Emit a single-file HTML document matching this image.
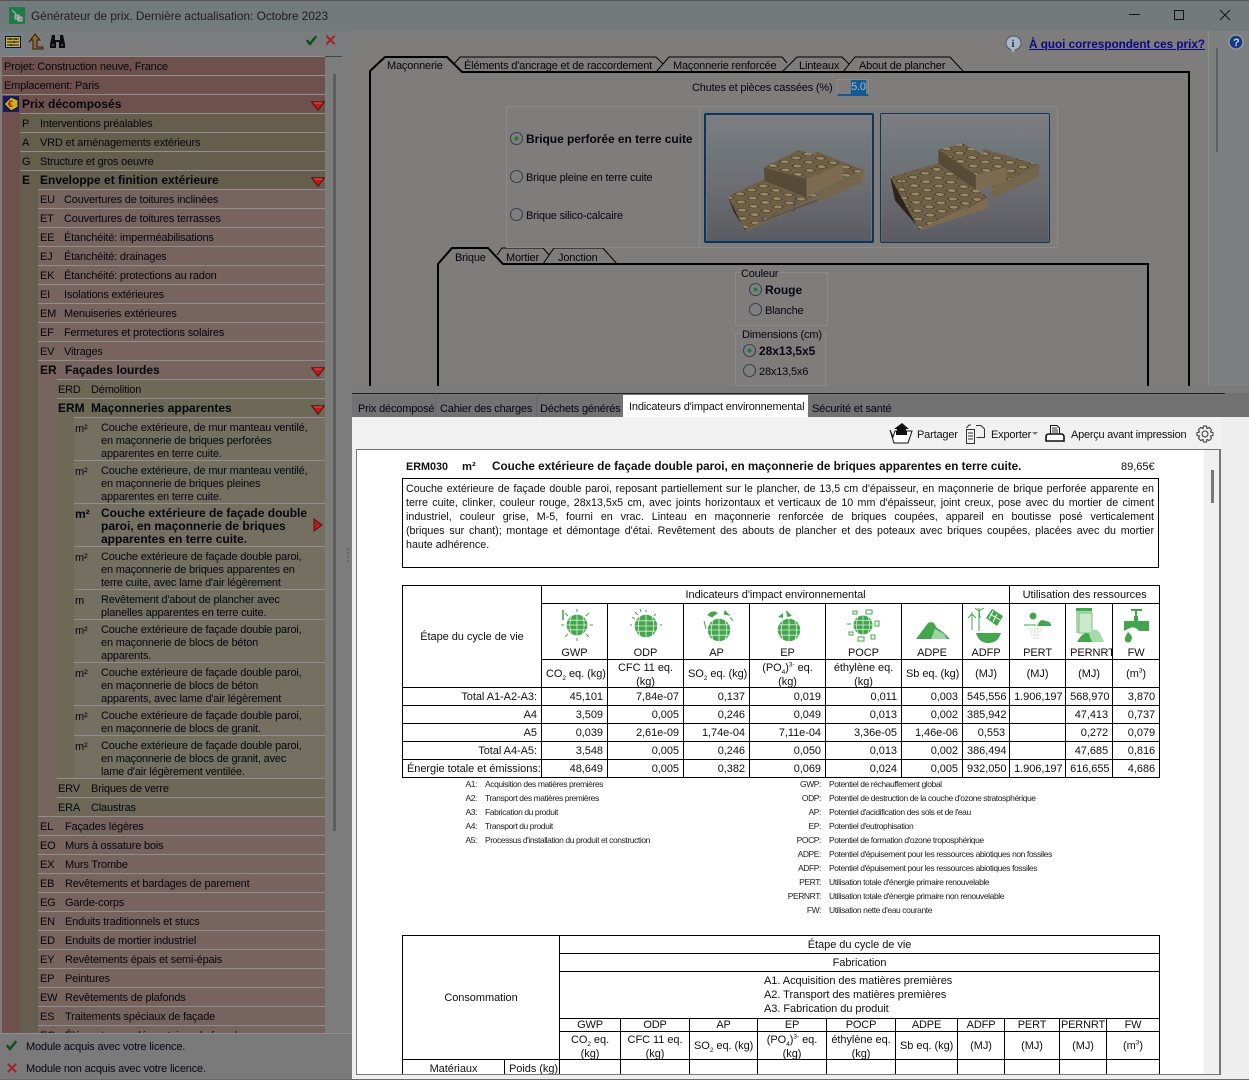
<!DOCTYPE html>
<html lang="fr"><head><meta charset="utf-8"><title>Générateur de prix</title>
<style>
html,body{margin:0;padding:0;width:1249px;height:1080px;overflow:hidden;background:#7d7d7d}
body{position:relative;font:11px "Liberation Sans",sans-serif;letter-spacing:-.18px;color:#05050f}
div,span.a,svg.a{position:absolute}
.t{white-space:nowrap;line-height:14px;margin-top:1px}
.h{font-size:12px;font-weight:bold;letter-spacing:-.05px;margin-top:0}
.m0{margin-top:0}
.r{box-sizing:border-box;border-top:1px solid #8f8f8f;white-space:nowrap}
.r b,.r i{position:absolute;font-style:normal;font-weight:normal;line-height:18px;top:1px;white-space:nowrap}
.r.bd b,.r.bd i{font-weight:bold;font-size:12px;letter-spacing:0;top:0}
.l0{left:2px;width:323px;height:19px;background:#6e514c}
.l1{left:20px;width:305px;height:19px;background:#655e4d}
.l2{left:38px;width:287px;height:19px;background:#78645e}
.l3{left:57px;width:268px;height:19px;background:#6e6957}
.l4{left:74px;width:251px;background:#746f60}
.l4 b{left:1px;top:4px;line-height:14px}
.l4 i{left:27px;top:4px;line-height:13px}
.r.bd.l4 b,.r.bd.l4 i{top:3px}
.r.bd.l4 b{line-height:14px}
.r.bd.l4 i{line-height:13px}
.gb{border:1px solid #8a8a8a}
.tb{position:absolute;border-collapse:collapse;table-layout:fixed;background:#fff;color:#111;letter-spacing:-.05px;font:11px/13.5px "Liberation Sans",sans-serif}
.tb td{border:1px solid #000;padding:0 4px;text-align:center;overflow:hidden;white-space:nowrap;letter-spacing:-.05px}
.tb td.n{text-align:right}
.tb tr.s td{padding-top:2px}
.tb tr.l td{line-height:11.500px}
.tb tr.z td{padding:0;letter-spacing:-.15px}
.tb td.q{padding-top:0 !important}
.tb td.c{padding-top:3px}
.tb .u{display:block;position:relative;top:1px;height:27px;line-height:14px}
.tb sub,.tb sup{font-size:6.500px;line-height:0}
.lg{font-size:8.500px;line-height:14px;color:#222;white-space:nowrap;letter-spacing:-.42px}
.ll{text-align:right}
.jl{position:absolute;left:406px;width:748px;height:14px;overflow:hidden;line-height:14px;font-size:10.700px;letter-spacing:0;text-align:justify;text-align-last:justify;white-space:normal;color:#111}
</style></head><body>
<svg width="0" height="0" style="position:absolute"><defs>
<symbol id="gl" viewBox="0 0 30 30"><circle cx="15" cy="15" r="13" fill="#43a64c"/><g stroke="#d8efd8" stroke-width="1" fill="none"><path d="M2 15H28M4 9H26M4 21H26"/><path d="M15 2V28M8 4Q4 15 8 26M22 4Q26 15 22 26"/></g></symbol>
<linearGradient id="bg" x1="0" y1="0" x2="0" y2="1"><stop offset="0" stop-color="#7e7e82"/><stop offset=".3" stop-color="#6e767a"/><stop offset=".5" stop-color="#6f7074"/><stop offset="1" stop-color="#5b5b62"/></linearGradient>
<pattern id="st" patternUnits="userSpaceOnUse" width="1" height="1" patternTransform="matrix(13 4.500 12 -4 0 0)"><rect width="1" height="1" fill="#6f5f47"/><ellipse cx=".5" cy=".5" rx=".29" ry=".29" fill="#968863" stroke="#3f3525" stroke-width=".07"/></pattern>
<symbol id="b1" viewBox="0 0 170 130"><rect width="170" height="130" fill="url(#bg)"/>
<path d="M112 37L162 57L116 78Z" fill="url(#st)"/><path d="M116 76L162 57L160 70L114 90Z" fill="#74654d"/>
<path d="M22 84L60 66L116 82L39 118Z" fill="url(#st)"/><path d="M39 118L116 82L114 90L41 120Z" fill="#74654d"/><path d="M22 84L39 118L41 120L28 100Z" fill="#2d2519"/>
<path d="M59 54L95 36L141 50L103 66Z" fill="url(#st)"/><path d="M103 66L141 50L141 66L103 85Z" fill="#7c6b51"/><path d="M59 54L103 66L103 85L60 68Z" fill="#574a36"/>
<path d="M90 100L92 80M56 110L114 88" stroke="#4e5358" stroke-width="1.500" fill="none"/></symbol>
<symbol id="b2" viewBox="0 0 170 130"><rect width="170" height="130" fill="url(#bg)"/>
<path d="M103 35L161 52L112 76Z" fill="url(#st)"/><path d="M112 74L161 52L160 64L112 86Z" fill="#74654d"/>
<path d="M9 64L58 50L108 84L38 117Z" fill="url(#st)"/><path d="M38 117L108 84L108 96L40 118Z" fill="#7c6b51"/><path d="M9 64L38 117L40 118L14 88Z" fill="#2d2519"/><path d="M20 66L30 96M88 95L108 84" stroke="#5b4c38" stroke-width="1" fill="none"/>
<path d="M58 36L83 30L127 54L96 62Z" fill="url(#st)"/><path d="M96 62L127 54L127 69L96 77Z" fill="#7c6b51"/><path d="M58 36L96 62L96 77L58 50Z" fill="#574a36"/></symbol>
<symbol id="tri" viewBox="0 0 14 10"><path d="M.5 .7H13.500L7 9.300Z" fill="#c21818" stroke="#4b1515"/><path d="M3 2H11" stroke="#ee5555"/></symbol>
</defs></svg>

<!-- left panel base -->
<div style="left:0;top:0;width:1249px;height:31px;background:#727a7c;border-top:1px solid #555;box-sizing:border-box"></div>
<svg class="a" style="left:9px;top:7px" width="16" height="17" viewBox="0 0 16 17"><rect width="16" height="17" fill="#1d7a47"/><path d="M3 3L7 7M6 8H10V12H6ZM9 10H13V14H9Z" stroke="#bbb" fill="#888"/></svg>
<div class="t m0" style="left:31px;top:9px;font-size:11.800px;letter-spacing:0;color:#1c1c1c">Générateur de prix. Dernière actualisation: Octobre 2023</div>
<div style="left:0;top:31px;width:352px;height:25px;background:#7a7c7d"></div>
<div style="left:2px;top:32px;width:21px;height:20px;background:#748089;border:1px solid #6a8296;box-sizing:border-box;border-radius:2px"></div>
<svg class="a" style="left:5px;top:36px" width="16" height="12" viewBox="0 0 16 12"><rect x=".5" y=".5" width="15" height="11" fill="#c8b24a" stroke="#111"/><path d="M2 3H14M2 6H14M2 9H14M5 2V4M9 5V7M6 8V10M11 2V4" stroke="#111"/></svg>
<svg class="a" style="left:28px;top:33px" width="16" height="17" viewBox="0 0 16 17"><path d="M1 9L7 1L12 7H9V14H15V16H5V7H3Z" fill="#8d6a35" stroke="#2f1f08"/></svg>
<svg class="a" style="left:49px;top:34px" width="17" height="15" viewBox="0 0 17 15"><path d="M3 1H6V6H11V1H14L16 10V14H10V8H7V14H1V10Z" fill="#0c0c0c"/><path d="M3 11H5M12 11H14" stroke="#888"/></svg>
<svg class="a" style="left:306px;top:35px" width="11" height="11" viewBox="0 0 14 13"><path d="M1 6L5 11L13 1" stroke="#0a4f18" stroke-width="3" fill="none"/></svg>
<svg class="a" style="left:325px;top:35px" width="11" height="10" viewBox="0 0 12 12"><path d="M1 1L11 11M11 1L1 11" stroke="#a51d1d" stroke-width="2.200" fill="none"/></svg>

<div style="left:2px;top:56px;width:340px;height:978px;background:#7c7c7c;border-top:1px solid #444;box-sizing:border-box"></div>
<div style="left:2px;top:57px;width:18px;height:977px;background:#6e514c"></div>
<div style="left:20px;top:95px;width:18px;height:939px;background:#655e4d"></div>
<div style="left:38px;top:190px;width:19px;height:844px;background:#78645e"></div>
<div style="left:57px;top:380px;width:17px;height:437px;background:#6e6957"></div>
<div style="left:333px;top:74px;width:3px;height:757px;background:#5d5d5d"></div>

<div class="r l0" style="top:56px"><b style="left:2px">Projet: Construction neuve, France</b></div>
<div class="r l0" style="top:75px"><b style="left:2px">Emplacement: Paris</b></div>
<div class="r l0 bd" style="top:94px"><b style="left:20px">Prix décomposés</b><svg style="position:absolute;left:309px;top:6px;width:14px;height:10px"><use href="#tri"/></svg></div>
<svg class="a" style="left:3px;top:96px" width="16" height="16" viewBox="0 0 16 16"><rect width="16" height="16" fill="#1a1a6e"/><path d="M8 1L15 4V11L8 15L1 8Z" fill="#c9b51a" stroke="#111"/><text x="5" y="11" font-size="9" font-weight="bold" fill="#a01010">€</text></svg>

<div class="r l1" style="top:113px"><b style="left:2px">P</b><i style="left:20px">Interventions préalables</i></div>
<div class="r l1" style="top:132px"><b style="left:2px">A</b><i style="left:20px">VRD et aménagements extérieurs</i></div>
<div class="r l1" style="top:151px"><b style="left:2px">G</b><i style="left:20px">Structure et gros oeuvre</i></div>
<div class="r l1 bd" style="top:170px"><b style="left:2px">E</b><i style="left:20px">Enveloppe et finition extérieure</i><svg style="position:absolute;left:291px;top:6px;width:14px;height:10px"><use href="#tri"/></svg></div>

<div class="r l2" style="top:189px"><b style="left:2px">EU</b><i style="left:26px">Couvertures de toitures inclinées</i></div>
<div class="r l2" style="top:208px"><b style="left:2px">ET</b><i style="left:26px">Couvertures de toitures terrasses</i></div>
<div class="r l2" style="top:227px"><b style="left:2px">EE</b><i style="left:26px">Étanchéité: imperméabilisations</i></div>
<div class="r l2" style="top:246px"><b style="left:2px">EJ</b><i style="left:26px">Étanchéité: drainages</i></div>
<div class="r l2" style="top:265px"><b style="left:2px">EK</b><i style="left:26px">Étanchéité: protections au radon</i></div>
<div class="r l2" style="top:284px"><b style="left:2px">EI</b><i style="left:26px">Isolations extérieures</i></div>
<div class="r l2" style="top:303px"><b style="left:2px">EM</b><i style="left:26px">Menuiseries extérieures</i></div>
<div class="r l2" style="top:322px"><b style="left:2px">EF</b><i style="left:26px">Fermetures et protections solaires</i></div>
<div class="r l2" style="top:341px"><b style="left:2px">EV</b><i style="left:26px">Vitrages</i></div>
<div class="r l2 bd" style="top:360px"><b style="left:2px">ER</b><i style="left:27px">Façades lourdes</i><svg style="position:absolute;left:273px;top:6px;width:14px;height:10px"><use href="#tri"/></svg></div>

<div class="r l3" style="top:379px"><b style="left:1px">ERD</b><i style="left:34px">Démolition</i></div>
<div class="r l3 bd" style="top:398px"><b style="left:1px">ERM</b><i style="left:34px">Maçonneries apparentes</i><svg style="position:absolute;left:254px;top:6px;width:14px;height:10px"><use href="#tri"/></svg></div>

<div class="r l4" style="top:417px;height:44px"><b>m²</b><i>Couche extérieure, de mur manteau ventilé,<br>en maçonnerie de briques perforées<br>apparentes en terre cuite.</i></div>
<div class="r l4" style="top:460px;height:43px"><b>m²</b><i>Couche extérieure, de mur manteau ventilé,<br>en maçonnerie de briques pleines<br>apparentes en terre cuite.</i></div>
<div class="r l4 bd" style="top:503px;height:43px"><b>m²</b><i>Couche extérieure de façade double<br>paroi, en maçonnerie de briques<br>apparentes en terre cuite.</i><svg style="position:absolute;left:239px;top:14px;width:10px;height:14px" viewBox="0 0 10 14"><path d="M1 1V13L9 7Z" fill="#c21818" stroke="#4b1515"/></svg></div>
<div class="r l4" style="top:546px;height:43px"><b>m²</b><i>Couche extérieure de façade double paroi,<br>en maçonnerie de briques apparentes en<br>terre cuite, avec lame d'air légèrement</i></div>
<div class="r l4" style="top:589px;height:30px"><b>m</b><i>Revêtement d'about de plancher avec<br>planelles apparentes en terre cuite.</i></div>
<div class="r l4" style="top:619px;height:43px"><b>m²</b><i>Couche extérieure de façade double paroi,<br>en maçonnerie de blocs de béton<br>apparents.</i></div>
<div class="r l4" style="top:662px;height:43px"><b>m²</b><i>Couche extérieure de façade double paroi,<br>en maçonnerie de blocs de béton<br>apparents, avec lame d'air légèrement</i></div>
<div class="r l4" style="top:705px;height:30px"><b>m²</b><i>Couche extérieure de façade double paroi,<br>en maçonnerie de blocs de granit.</i></div>
<div class="r l4" style="top:735px;height:43px"><b>m²</b><i>Couche extérieure de façade double paroi,<br>en maçonnerie de blocs de granit, avec<br>lame d'air légèrement ventilée.</i></div>

<div class="r l3" style="top:778px"><b style="left:1px">ERV</b><i style="left:34px">Briques de verre</i></div>
<div class="r l3" style="top:797px"><b style="left:1px">ERA</b><i style="left:34px">Claustras</i></div>

<div class="r l2" style="top:816px"><b style="left:2px">EL</b><i style="left:27px">Façades légères</i></div>
<div class="r l2" style="top:835px"><b style="left:2px">EO</b><i style="left:27px">Murs à ossature bois</i></div>
<div class="r l2" style="top:854px"><b style="left:2px">EX</b><i style="left:27px">Murs Trombe</i></div>
<div class="r l2" style="top:873px"><b style="left:2px">EB</b><i style="left:27px">Revêtements et bardages de parement</i></div>
<div class="r l2" style="top:892px"><b style="left:2px">EG</b><i style="left:27px">Garde-corps</i></div>
<div class="r l2" style="top:911px"><b style="left:2px">EN</b><i style="left:27px">Enduits traditionnels et stucs</i></div>
<div class="r l2" style="top:930px"><b style="left:2px">ED</b><i style="left:27px">Enduits de mortier industriel</i></div>
<div class="r l2" style="top:949px"><b style="left:2px">EY</b><i style="left:27px">Revêtements épais et semi-épais</i></div>
<div class="r l2" style="top:968px"><b style="left:2px">EP</b><i style="left:27px">Peintures</i></div>
<div class="r l2" style="top:987px"><b style="left:2px">EW</b><i style="left:27px">Revêtements de plafonds</i></div>
<div class="r l2" style="top:1006px"><b style="left:2px">ES</b><i style="left:27px">Traitements spéciaux de façade</i></div>
<div class="r l2" style="top:1025px;height:9px;overflow:hidden"><b style="left:2px">EC</b><i style="left:27px">Éléments complémentaires de façade</i></div>

<div style="left:0;top:1033px;width:352px;height:47px;background:#7a7a7a;border-top:1px solid #8f8f8f;box-sizing:border-box"></div>
<svg class="a" style="left:6px;top:1040px" width="11" height="11" viewBox="0 0 14 13"><path d="M1 6L5 11L13 1" stroke="#0a4f18" stroke-width="3" fill="none"/></svg>
<div class="t" style="left:26px;top:1039px">Module acquis avec votre licence.</div>
<svg class="a" style="left:7px;top:1063px" width="10" height="10" viewBox="0 0 12 12"><path d="M1 1L11 11M11 1L1 11" stroke="#a51d1d" stroke-width="2.200" fill="none"/></svg>
<div class="t" style="left:26px;top:1061px">Module non acquis avec votre licence.</div>
<div style="left:347px;top:548px;width:2px;height:14px;border-left:2px dotted #666"></div>
<div style="left:0;top:1079px;width:352px;height:1px;background:#444"></div>

<!-- window controls -->
<div style="left:1129px;top:14px;width:11px;height:1px;background:#111"></div>
<div style="left:1174px;top:10px;width:8px;height:8px;border:1px solid #111"></div>
<svg class="a" style="left:1219px;top:9px" width="12" height="12"><path d="M1 1L11 11M11 1L1 11" stroke="#111" fill="none"/></svg>

<!-- right top panel -->
<div style="left:352px;top:31px;width:897px;height:362px;background:#7e7d7c"></div>
<div style="left:1208px;top:31px;width:41px;height:362px;background:#7d8080;border-left:1px solid #8b8b8b;box-sizing:border-box"></div>
<div style="left:1216px;top:48px;width:2px;height:104px;background:#5f5f5f"></div>
<svg class="a" style="left:1005px;top:35px" width="17" height="18" viewBox="0 0 17 18"><ellipse cx="8.500" cy="8" rx="7.500" ry="7" fill="#a8b8c4" stroke="#556"/><path d="M6 14L8 18L10 14Z" fill="#a8b8c4"/><text x="6.500" y="12" font-size="11" font-weight="bold" font-family="Liberation Serif" fill="#123a66">i</text></svg>
<div class="t" style="left:1029px;top:37px;font-weight:bold;font-size:11.700px;letter-spacing:0;color:#090985;text-decoration:underline">À quoi correspondent ces prix?</div>
<svg class="a" style="left:1228px;top:34px" width="16" height="16" viewBox="0 0 16 16"><circle cx="8" cy="8" r="7" fill="#123a85" stroke="#999" stroke-width="1.400"/><text x="5" y="12" font-size="11" font-weight="bold" fill="#cfd8e8">?</text></svg>

<svg class="a" style="left:352px;top:31px" width="897" height="362" viewBox="352 31 897 362" fill="none">
<path d="M370 386V71L385 57H447L462 72H1189V386" stroke="#000" stroke-width="2"/>
<path d="M454 64L460 57H656L663 64M656 72L669 57H782L787 63M782 72L797 57H842L849 64M843 72L855 57H950L963 71" stroke="#000"/>
<path d="M438 386V264L452 248H488L503 264H1148V386" stroke="#000" stroke-width="2"/>
<path d="M497 255L502 248H543L549 255M543 264L554 248H603L617 264" stroke="#000"/>
</svg>
<div class="t" style="left:387px;top:58px">Maçonnerie</div>
<div class="t" style="left:464px;top:58px">Éléments d'ancrage et de raccordement</div>
<div class="t" style="left:673px;top:58px">Maçonnerie renforcée</div>
<div class="t" style="left:799px;top:58px">Linteaux</div>
<div class="t" style="left:859px;top:58px">About de plancher</div>
<div class="t" style="left:692px;top:80px">Chutes et pièces cassées (%)</div>
<div style="left:837px;top:79px;width:32px;height:17px;box-sizing:border-box;border:1px solid #888;border-bottom:2px solid #0f5c96"></div>
<div class="t m0" style="left:851px;top:80px;width:15px;height:14px;background:#0f5c96;color:#b8b8b8;text-align:center;line-height:15px">5.0</div>

<div class="gb" style="left:506px;top:106px;width:192px;height:140px"></div>
<div class="gb" style="left:699px;top:106px;width:357px;height:140px"></div>
<svg class="a" style="left:704px;top:113px;border:2px solid #0a355c;box-sizing:border-box;border-radius:2px" width="170" height="130" viewBox="0 0 170 130"><use href="#b1" width="170" height="130"/></svg>
<svg class="a" style="left:880px;top:113px;border:1px solid #0f3557;box-sizing:border-box;border-radius:2px" width="170" height="130" viewBox="0 0 170 130"><use href="#b2" width="170" height="130"/></svg>

<svg class="a" style="left:352px;top:31px" width="850" height="362" viewBox="352 31 850 362">
<g fill="#807f80" stroke="#36424f" stroke-width="1.100"><circle cx="516.500" cy="138.500" r="6"/><circle cx="516.500" cy="176.500" r="6"/><circle cx="516.500" cy="214.500" r="6"/><circle cx="755.500" cy="289.500" r="6"/><circle cx="755.500" cy="309.500" r="6"/><circle cx="749.500" cy="350.500" r="6"/><circle cx="749.500" cy="370.500" r="6"/></g>
<g fill="#1f7a36"><circle cx="516.500" cy="138.500" r="2"/><circle cx="755.500" cy="289.500" r="2"/><circle cx="749.500" cy="350.500" r="2"/></g></svg>
<div class="t h" style="left:526px;top:132px">Brique perforée en terre cuite</div>
<div class="t" style="left:526px;top:170px">Brique pleine en terre cuite</div>
<div class="t" style="left:526px;top:208px">Brique silico-calcaire</div>

<div class="t" style="left:455px;top:250px">Brique</div>
<div class="t" style="left:506px;top:250px">Mortier</div>
<div class="t" style="left:558px;top:250px">Jonction</div>

<div class="gb" style="left:735px;top:272px;width:91px;height:52px"></div>
<div class="t" style="left:740px;top:266px;background:#7e7d7c;padding:0 1px">Couleur</div>
<div class="t h" style="left:765px;top:283px">Rouge</div>
<div class="t" style="left:765px;top:303px">Blanche</div>
<div style="left:735px;top:333px;width:91px;height:53px;border:1px solid #8a8a8a;box-sizing:border-box"></div>
<div class="t" style="left:741px;top:327px;background:#7e7d7c;padding:0 1px">Dimensions (cm)</div>
<div class="t h" style="left:759px;top:344px">28x13,5x5</div>
<div class="t" style="left:759px;top:364px">28x13,5x6</div>

<!-- tab strip -->
<div style="left:352px;top:386px;width:897px;height:7px;background:#7b7b7b"></div>
<div style="left:352px;top:393px;width:897px;height:24px;background:#727272"></div>
<div style="left:352px;top:393px;width:873px;height:1px;background:#222"></div>
<div class="t" style="left:358px;top:401px">Prix décomposé</div>
<div class="t" style="left:440px;top:401px">Cahier des charges</div>
<div class="t" style="left:540px;top:401px">Déchets générés</div>
<div class="t m0" style="left:623px;top:395px;width:185px;height:22px;background:#fff;color:#111;text-indent:6px;line-height:24px">Indicateurs d'impact environnemental</div>
<div class="t" style="left:812px;top:401px">Sécurité et santé</div>
<div style="left:435px;top:396px;width:1px;height:21px;background:#676767"></div>
<div style="left:536px;top:396px;width:1px;height:21px;background:#676767"></div>

<!-- document pane -->
<div style="left:352px;top:417px;width:897px;height:663px;background:#eee"></div>
<div style="left:352px;top:417px;width:869px;height:32px;background:#f1f1f1"></div>
<div style="left:356px;top:449px;width:865px;height:626px;background:#fff;border:1px solid #777;border-right:2px solid #777;box-sizing:border-box"></div>
<div style="left:1204px;top:450px;width:15px;height:624px;background:#f0f0f0"></div>
<div style="left:1211px;top:470px;width:3px;height:33px;background:#777"></div>
<div style="left:0;top:1079px;width:1249px;height:1px;background:#6a6a6a"></div>

<svg class="a" style="left:889px;top:422px" width="24" height="22" viewBox="0 0 24 22"><path d="M1 8L5 21H19L23 9H6L4 15Z" fill="#fff" stroke="#111"/><path d="M8 9V7H5L13 1L20 7H17V9Z" fill="#111"/><path d="M7 9H18V13H7Z" fill="#111"/></svg>
<div class="t" style="left:917px;top:427px;color:#111">Partager</div>
<svg class="a" style="left:965px;top:424px" width="21" height="20" viewBox="0 0 21 20" fill="none" stroke="#333"><path d="M1.500 5.500H9.500V19.500H1.500ZM3 9H8M3 12H8M3 15H8"/><path d="M11 1.500H16L19.500 5V13.500H11.500M1.500 4L4 1L6 1"/></svg>
<div class="t" style="left:991px;top:427px;color:#111">Exporter</div>
<svg class="a" style="left:1032px;top:432px" width="6" height="4"><path d="M0 0H6L3 3Z" fill="#777"/></svg>
<svg class="a" style="left:1045px;top:424px" width="20" height="19" viewBox="0 0 20 19"><path d="M5.500 1.500H12L14.500 4V10H5.500Z" fill="#fff" stroke="#111"/><path d="M7 4H12M7 6H13M7 8H13" stroke="#333"/><path d="M1 13Q1 10 4 10H16Q19 10 19 13V17H1Z" fill="#fff" stroke="#111" stroke-width="1.600"/></svg>
<div class="t" style="left:1071px;top:427px;color:#111;letter-spacing:-.25px">Aperçu avant impression</div>
<svg class="a" style="left:1196px;top:425px" width="18" height="18" viewBox="0 0 18 18" fill="none" stroke="#333"><circle cx="9" cy="9" r="3"/><path d="M7.500 1H10.500L11 3.500L13.300 2.500L15.500 4.700L14.500 7L17 7.500V10.500L14.500 11L15.500 13.300L13.300 15.500L11 14.500L10.500 17H7.500L7 14.500L4.700 15.500L2.500 13.300L3.500 11L1 10.500V7.500L3.500 7L2.500 4.700L4.700 2.500L7 3.500Z"/></svg>

<!-- heading -->
<div class="t m0" style="left:406px;top:460px;font-weight:bold;font-size:10.800px;letter-spacing:0;color:#111">ERM030</div>
<div class="t m0" style="left:462px;top:460px;font-weight:bold;font-size:11.200px;letter-spacing:0;color:#111">m²</div>
<div class="t m0" style="left:492px;top:460px;font-weight:bold;font-size:11.700px;letter-spacing:0;color:#111">Couche extérieure de façade double paroi, en maçonnerie de briques apparentes en terre cuite.</div>
<div class="t m0" style="left:1121px;top:460px;font-size:11px;letter-spacing:0;color:#111">89,65€</div>
<div style="left:402px;top:478px;width:757px;height:90px;border:1px solid #000;box-sizing:border-box"></div>
<div class="jl" style="top:482px">Couche extérieure de façade double paroi, reposant partiellement sur le plancher, de 13,5 cm d'épaisseur, en maçonnerie de brique perforée apparente en</div>
<div class="jl" style="top:496px">terre cuite, clinker, couleur rouge, 28x13,5x5 cm, avec joints horizontaux et verticaux de 10 mm d'épaisseur, joint creux, pose avec du mortier de ciment</div>
<div class="jl" style="top:510px">industriel, couleur grise, M-5, fourni en vrac. Linteau en maçonnerie renforcée de briques coupées, appareil en boutisse posé verticalement</div>
<div class="jl" style="top:524px">(briques sur chant); montage et démontage d'étai. Revêtement des abouts de plancher et des poteaux avec briques coupées, placées avec du mortier</div>
<div class="jl" style="top:538px;text-align-last:left">haute adhérence.</div>

<!-- table 1 -->
<table class="tb" style="left:402px;top:585px;width:757px">
<colgroup><col style="width:139px"><col style="width:66px"><col style="width:76px"><col style="width:66px"><col style="width:76px"><col style="width:76px"><col style="width:61px"><col style="width:47px"><col style="width:56px"><col style="width:47px"><col style="width:47px"></colgroup>
<tr class="s" style="height:18px"><td rowspan="3">Étape du cycle de vie</td><td colspan="7">Indicateurs d'impact environnemental</td><td colspan="3">Utilisation des ressources</td></tr>
<tr class="l" style="height:56px;vertical-align:bottom"><td>GWP</td><td>ODP</td><td>AP</td><td>EP</td><td>POCP</td><td>ADPE</td><td>ADFP</td><td>PERT</td><td>PERNRT</td><td>FW</td></tr>
<tr class="s" style="height:28px"><td>CO<sub>2</sub> eq. (kg)</td><td class="q"><span class="u">CFC 11 eq.<br>(kg)</span></td><td>SO<sub>2</sub> eq. (kg)</td><td class="q"><span class="u">(PO<sub>4</sub>)<sup>3-</sup> eq.<br>(kg)</span></td><td class="q"><span class="u">éthylène eq.<br>(kg)</span></td><td>Sb eq. (kg)</td><td>(MJ)</td><td>(MJ)</td><td>(MJ)</td><td>(m<sup>3</sup>)</td></tr>
<tr class="s" style="height:18px"><td class="n">Total A1-A2-A3:</td><td class="n">45,101</td><td class="n">7,84e-07</td><td class="n">0,137</td><td class="n">0,019</td><td class="n">0,011</td><td class="n">0,003</td><td class="n">545,556</td><td class="n">1.906,197</td><td class="n">568,970</td><td class="n">3,870</td></tr>
<tr class="s" style="height:18px"><td class="n">A4</td><td class="n">3,509</td><td class="n">0,005</td><td class="n">0,246</td><td class="n">0,049</td><td class="n">0,013</td><td class="n">0,002</td><td class="n">385,942</td><td class="n"></td><td class="n">47,413</td><td class="n">0,737</td></tr>
<tr class="s" style="height:18px"><td class="n">A5</td><td class="n">0,039</td><td class="n">2,61e-09</td><td class="n">1,74e-04</td><td class="n">7,11e-04</td><td class="n">3,36e-05</td><td class="n">1,46e-06</td><td class="n">0,553</td><td class="n"></td><td class="n">0,272</td><td class="n">0,079</td></tr>
<tr class="s" style="height:18px"><td class="n">Total A4-A5:</td><td class="n">3,548</td><td class="n">0,005</td><td class="n">0,246</td><td class="n">0,050</td><td class="n">0,013</td><td class="n">0,002</td><td class="n">386,494</td><td class="n"></td><td class="n">47,685</td><td class="n">0,816</td></tr>
<tr class="s" style="height:18px"><td class="n">Énergie totale et émissions:</td><td class="n">48,649</td><td class="n">0,005</td><td class="n">0,382</td><td class="n">0,069</td><td class="n">0,024</td><td class="n">0,005</td><td class="n">932,050</td><td class="n">1.906,197</td><td class="n">616,655</td><td class="n">4,686</td></tr>
</table>

<!-- impact icons -->
<svg class="a" style="left:560px;top:608px" width="34" height="34" viewBox="0 0 34 34"><use href="#gl" x="5" y="5" width="24" height="24"/><g stroke="#43a64c" fill="none"><path d="M4 17H1M33 17H30M17 4V1M17 33V30M8 8L5 5M26 26L29 29M26 8L29 5M8 26L5 29"/><path d="M3 2V12" stroke-width="1.600"/></g></svg>
<svg class="a" style="left:629px;top:608px" width="34" height="34" viewBox="0 0 34 34"><use href="#gl" x="4" y="5" width="26" height="26"/><g stroke="#43a64c" fill="none"><path d="M1 17H3M31 17H33M17 2V4M6 4L9 7M3 9L6 11M11 1L12 4M27 6L25 8"/></g></svg>
<svg class="a" style="left:703px;top:609px" width="32" height="34" viewBox="0 0 32 34"><use href="#gl" x="3" y="8" width="26" height="26"/><path d="M5 6Q9 1 14 4L9 8ZM22 2L26 6L21 5ZM1 12L3 20M27 8L30 12" stroke="#43a64c" fill="#43a64c"/></svg>
<svg class="a" style="left:775px;top:609px" width="28" height="34" viewBox="0 0 28 34"><use href="#gl" x="1" y="8" width="26" height="26"/><path d="M11 1L17 7L12 8ZM3 8L8 4L8 9Z" fill="#43a64c"/></svg>
<svg class="a" style="left:846px;top:608px" width="34" height="34" viewBox="0 0 34 34"><use href="#gl" x="6" y="6" width="22" height="22"/><path d="M7 3H11V6H7ZM20 2H26V6H20ZM1 16H5M29 13H33V18H29ZM3 24H7V27H3ZM12 29H18V33H12ZM25 27H29V31H25Z" stroke="#43a64c" fill="#fff"/></svg>
<svg class="a" style="left:915px;top:617px" width="36" height="24" viewBox="0 0 36 24"><path d="M1 22L16 2L22 11L28 15L35 22Z" fill="#43a64c"/><path d="M13 6L16 2L19 6L16 5Z" fill="#fff"/><path d="M16 22L20 12L29 17L32 22Z" fill="#9dd3a0"/></svg>
<svg class="a" style="left:967px;top:606px" width="37" height="38" viewBox="0 0 37 38"><g stroke="#43a64c" fill="none"><path d="M5 6V24M12 2V25M5 8L1 12M5 8L9 12M12 5L8 2M12 5L17 2M12 5L13 12"/></g><path d="M19 12L25 3L36 10L30 20Z" fill="#43a64c"/><path d="M23 8L33 14M26 5L22 13M30 8L26 16" stroke="#fff"/><path d="M9 27H34Q31 37 21 37Q12 37 9 27Z" fill="#43a64c"/></svg>
<svg class="a" style="left:1023px;top:610px" width="30" height="32" viewBox="0 0 30 32"><circle cx="10" cy="6" r="3.500" fill="#43a64c"/><path d="M15 14Q18 8 22 11Q28 11 28 16H14Z" fill="#43a64c"/><path d="M1 15H13" stroke="#43a64c"/><path d="M5 19H20M7 22H18M8 25H17M10 28H15" stroke="#b6dcb8" stroke-dasharray="2 1"/></svg>
<svg class="a" style="left:1075px;top:607px" width="30" height="37" viewBox="0 0 30 37"><rect x="1" y="1" width="16" height="3" fill="#43a64c"/><rect x="1" y="4" width="16" height="22" fill="#a8d9aa"/><rect x="4" y="6" width="13" height="20" fill="#cce9cd" stroke="#7cc280"/><path d="M2 35Q12 17 20 35Z" fill="#43a64c"/><path d="M14 27Q22 15 29 35H17Z" fill="#a8d9aa"/></svg>
<svg class="a" style="left:1122px;top:607px" width="28" height="36" viewBox="0 0 28 36"><path d="M2 14H12V9H16V14H27V24H17Q13 19 8 21L2 24Z" fill="#43a64c"/><path d="M9 3H20M14 3V9" stroke="#43a64c" stroke-width="2"/><path d="M6 25Q1 32 4 35Q9 37 10 31Q10 28 6 25Z" fill="#43a64c"/></svg>

<!-- legends -->
<div class="lg ll" style="left:427px;top:777px;width:50px">A1:</div><div class="lg" style="left:485px;top:777px">Acquisition des matières premières</div>
<div class="lg ll" style="left:427px;top:791px;width:50px">A2:</div><div class="lg" style="left:485px;top:791px">Transport des matières premières</div>
<div class="lg ll" style="left:427px;top:805px;width:50px">A3:</div><div class="lg" style="left:485px;top:805px">Fabrication du produit</div>
<div class="lg ll" style="left:427px;top:819px;width:50px">A4:</div><div class="lg" style="left:485px;top:819px">Transport du produit</div>
<div class="lg ll" style="left:427px;top:833px;width:50px">A5:</div><div class="lg" style="left:485px;top:833px">Processus d'installation du produit et construction</div>
<div class="lg ll" style="left:761px;top:777px;width:60px">GWP:</div><div class="lg" style="left:829px;top:777px">Potentiel de réchauffement global</div>
<div class="lg ll" style="left:761px;top:791px;width:60px">ODP:</div><div class="lg" style="left:829px;top:791px">Potentiel de destruction de la couche d'ozone stratosphérique</div>
<div class="lg ll" style="left:761px;top:805px;width:60px">AP:</div><div class="lg" style="left:829px;top:805px">Potentiel d'acidification des sols et de l'eau</div>
<div class="lg ll" style="left:761px;top:819px;width:60px">EP:</div><div class="lg" style="left:829px;top:819px">Potentiel d'eutrophisation</div>
<div class="lg ll" style="left:761px;top:833px;width:60px">POCP:</div><div class="lg" style="left:829px;top:833px">Potentiel de formation d'ozone troposphérique</div>
<div class="lg ll" style="left:761px;top:847px;width:60px">ADPE:</div><div class="lg" style="left:829px;top:847px">Potentiel d'épuisement pour les ressources abiotiques non fossiles</div>
<div class="lg ll" style="left:761px;top:861px;width:60px">ADFP:</div><div class="lg" style="left:829px;top:861px">Potentiel d'épuisement pour les ressources abiotiques fossiles</div>
<div class="lg ll" style="left:761px;top:875px;width:60px">PERT:</div><div class="lg" style="left:829px;top:875px">Utilisation totale d'énergie primaire renouvelable</div>
<div class="lg ll" style="left:761px;top:889px;width:60px">PERNRT:</div><div class="lg" style="left:829px;top:889px">Utilisation totale d'énergie primaire non renouvelable</div>
<div class="lg ll" style="left:761px;top:903px;width:60px">FW:</div><div class="lg" style="left:829px;top:903px">Utilisation nette d'eau courante</div>

<!-- table 2 -->
<div style="left:402px;top:935px;width:758px;height:139px;overflow:hidden">
<table class="tb" style="left:0;top:0;width:757px">
<colgroup><col style="width:102px"><col style="width:55px"><col style="width:61px"><col style="width:69px"><col style="width:68px"><col style="width:69px"><col style="width:69px"><col style="width:62px"><col style="width:47px"><col style="width:55px"><col style="width:47px"><col style="width:53px"></colgroup>
<tr class="s" style="height:18px"><td class="c" colspan="2" rowspan="5">Consommation</td><td colspan="10">Étape du cycle de vie</td></tr>
<tr class="s" style="height:18px"><td colspan="10">Fabrication</td></tr>
<tr style="height:47px"><td colspan="10" style="text-align:left;padding-left:204px;line-height:14px">A1. Acquisition des matières premières<br>A2. Transport des matières premières<br>A3. Fabrication du produit</td></tr>
<tr class="z" style="height:13px;line-height:12px"><td>GWP</td><td>ODP</td><td>AP</td><td>EP</td><td>POCP</td><td>ADPE</td><td>ADFP</td><td>PERT</td><td>PERNRT</td><td>FW</td></tr>
<tr class="s" style="height:28px"><td class="q"><span class="u">CO<sub>2</sub> eq.<br>(kg)</span></td><td class="q"><span class="u">CFC 11 eq.<br>(kg)</span></td><td>SO<sub>2</sub> eq. (kg)</td><td class="q"><span class="u">(PO<sub>4</sub>)<sup>3-</sup> eq.<br>(kg)</span></td><td class="q"><span class="u">éthylène eq.<br>(kg)</span></td><td>Sb eq. (kg)</td><td>(MJ)</td><td>(MJ)</td><td>(MJ)</td><td>(m<sup>3</sup>)</td></tr>
<tr class="s" style="height:18px"><td>Matériaux</td><td>Poids (kg)</td><td></td><td></td><td></td><td></td><td></td><td></td><td></td><td></td><td></td><td></td></tr>
</table></div>
</body></html>
